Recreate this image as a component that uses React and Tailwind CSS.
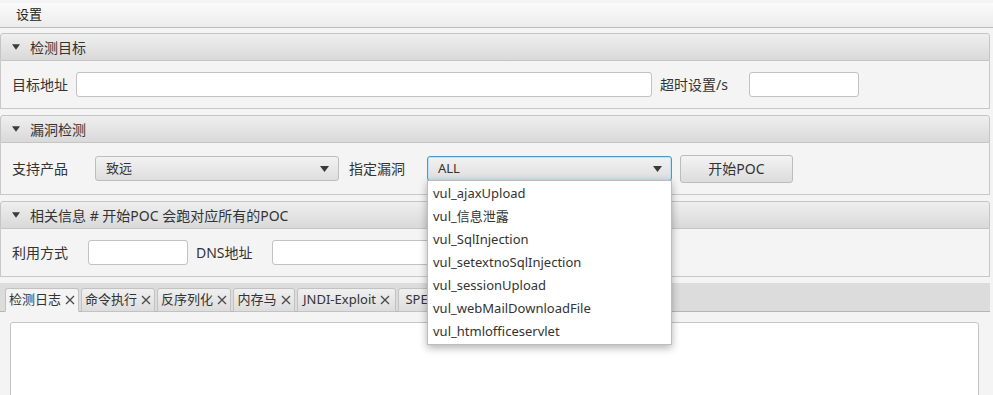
import React from 'react';

const font = { fontFamily: '"Noto Sans", "Noto Sans CJK SC", sans-serif' };

const Tri = ({ className = '' }) => (
  <svg width="9" height="6" viewBox="0 0 9 6" className={className}>
    <path d="M0 0 L9 0 L4.5 6 Z" fill="#3a3a3a" />
  </svg>
);

const Header = ({ title }) => (
  <div className="h-[28px] flex items-center pl-[11px] gap-[10px] border border-[#c5c5c5] rounded-t-[3px] bg-gradient-to-b from-[#efefef] to-[#d9d9d9] text-[14px] text-[#333]">
    <Tri className="w-[8px]" />
    <span>{title}</span>
  </div>
);

const Section = ({ title, tall, children }) => (
  <div className="w-[990px]">
    <Header title={title} />
    <div
      className={`${tall ? 'h-[52px]' : 'h-[48px]'} flex items-center px-[11px] border-x border-b border-[#c8c8c8] bg-[#f4f4f4] text-[14px] text-[#333]`}
    >
      {children}
    </div>
  </div>
);

const Input = ({ className }) => (
  <div className={`h-[25px] bg-white border border-[#c2c2c2] rounded-[3px] ${className}`} />
);

const Combo = ({ value, focus, className }) => (
  <div
    className={`h-[25px] flex items-center justify-between rounded-[3px] bg-gradient-to-b from-[#f2f2f2] to-[#dedede] ${
      focus ? 'border border-[#2ea2dd] shadow-[inset_0_0_0_1px_#bfe3f5]' : 'border border-[#bdbdbd]'
    } ${className}`}
  >
    <span className="pl-[10px] text-[13px] text-[#333]">{value}</span>
    <Tri className="mr-[9px]" />
  </div>
);

const Close = () => (
  <svg width="10" height="10" viewBox="0 0 10 10" className="shrink-0">
    <path d="M1 1 L9 9 M9 1 L1 9" stroke="#4a4a4a" strokeWidth="1.3" />
  </svg>
);

const tabs = [
  { t: '检测日志', w: 'w-[74px]' },
  { t: '命令执行', w: 'w-[74px]' },
  { t: '反序列化', w: 'w-[74px]' },
  { t: '内存马', w: 'w-[62px]' },
  { t: 'JNDI-Exploit', w: 'w-[99px]' },
  { t: 'SPEL注入', w: 'w-[84px]' },
];
const items = [
  'vul_ajaxUpload',
  'vul_信息泄露',
  'vul_SqlInjection',
  'vul_setextnoSqlInjection',
  'vul_sessionUpload',
  'vul_webMailDownloadFile',
  'vul_htmlofficeservlet',
];

export default function App() {
  return (
    <div className="relative w-[993px] h-[395px] overflow-hidden bg-[#f4f4f4]" style={font}>
      {/* menu bar */}
      <div className="pt-[3px]">
        <div className="h-[25px] flex items-center pl-[16px] border-b border-[#bcbcbc] bg-gradient-to-b from-[#fbfbfb] to-[#ececec] text-[13px] text-[#222]">
          设置
        </div>
      </div>

      <div className="flex flex-col gap-[6px] pt-[5px]">
        <Section title="检测目标">
          <span>目标地址</span>
          <Input className="ml-[8px] w-[576px]" />
          <span className="ml-[8px]">超时设置/s</span>
          <Input className="ml-[21px] w-[110px]" />
        </Section>

        <Section title="漏洞检测" tall>
          <span>支持产品</span>
          <Combo value="致远" className="ml-[27px] w-[244px]" />
          <span className="ml-[10px]">指定漏洞</span>
          <Combo value="ALL" focus className="ml-[22px] w-[245px]" />
          <button className="ml-[8px] w-[113px] h-[28px] rounded-[3px] border border-[#bcbcbc] bg-gradient-to-b from-[#f3f3f3] to-[#dcdcdc] text-[14px] text-[#333]">
            开始POC
          </button>
        </Section>

        <Section title="相关信息 # 开始POC 会跑对应所有的POC">
          <span>利用方式</span>
          <Input className="ml-[20px] w-[100px]" />
          <span className="ml-[8px]">DNS地址</span>
          <Input className="ml-[19px] w-[160px]" />
        </Section>

        {/* tab pane */}
        <div className="w-[990px]">
          <div className="h-[29px] flex items-end gap-[2px] pl-[5px] bg-[#dcdcdc] border-b border-[#b5b5b5] pt-[5px]">
            {tabs.map((tab, i) => (
              <div
                key={tab.t}
                className={`${tab.w} h-[24px] -mb-px flex items-center justify-center gap-[4px] border border-[#c2c2c2] rounded-t-[3px] text-[13px] text-[#333] ${
                  i === 0 ? 'bg-[#f4f4f4] border-b-[#f4f4f4]' : 'bg-gradient-to-b from-[#f0f0f0] to-[#dddddd]'
                }`}
              >
                <span>{tab.t}</span>
                <Close />
              </div>
            ))}
          </div>
          <div className="pl-[10px] pt-[10px] pr-[11px]">
            <div className="h-[80px] bg-white border border-[#c4c4c4] rounded-t-[3px]" />
          </div>
        </div>
      </div>

      {/* dropdown popup */}
      <div className="absolute left-[427px] top-[180px] w-[245px] py-[1px] bg-white border border-[#bdbdbd] shadow-[0_3px_8px_rgba(0,0,0,0.3)]">
        {items.map((it) => (
          <div key={it} className="h-[23px] flex items-center pl-[5px] text-[13px] text-[#333]">
            {it}
          </div>
        ))}
      </div>
    </div>
  );
}
